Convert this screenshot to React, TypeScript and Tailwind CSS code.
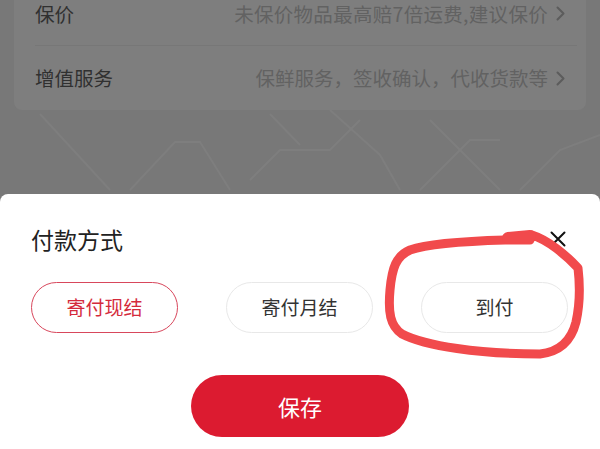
import React from "react";

function Chevron() {
  return (
    <svg width="9" height="15" viewBox="0 0 9 15" className="ml-[8px] shrink-0">
      <path d="M1.5 1.5 L7.5 7.5 L1.5 13.5" fill="none" stroke="#5c5c5c" strokeWidth="2" strokeLinecap="round" strokeLinejoin="round" />
    </svg>
  );
}

function Row({ label, value, divider, wide }: { label: string; value: string; divider?: boolean; wide?: boolean }) {
  return (
    <div className={`h-[64px] ml-[21px] mr-[9px] pr-[12px] flex items-center justify-between ${divider ? "border-b border-[#777777]" : ""}`}>
      <span className="text-[19.5px] text-[#303030]">{label}</span>
      <div className="flex items-center">
        <span className={`text-[19.5px] text-[#626262] ${wide ? "tracking-[0.3px]" : "tracking-[0px]"}`}>{value}</span>
        <Chevron />
      </div>
    </div>
  );
}

function Pill({ text, active }: { text: string; active?: boolean }) {
  return (
    <div
      className={`w-[147px] h-[51px] rounded-full flex items-center justify-center text-[19px] border ${
        active ? "border-[#d8475c] text-[#d42a3c]" : "border-[#e8e8e8] text-[#333333]"
      }`}
    >
      {text}
    </div>
  );
}

export default function App() {
  return (
    <div className="relative w-[600px] h-[449px] overflow-hidden bg-[#787878] flex flex-col font-['Noto_Sans_CJK_SC','Noto_Sans',sans-serif]">
      <div className="px-[14px]">
        <div className="-mt-[18px] bg-[#7e7e7e] rounded-b-[8px]">
          <Row label="保价" value="未保价物品最高赔7倍运费,建议保价" divider wide />
          <Row label="增值服务" value="保鲜服务，签收确认，代收货款等" />
        </div>
      </div>
      <div className="flex-1 relative">
        <svg className="absolute inset-0" width="600" height="83" viewBox="0 0 600 83">
          <g fill="none" stroke="#7e7e7e" strokeWidth="2">
            <path d="M40 4 L110 80" />
            <path d="M130 80 L175 32 L200 32 L230 80" />
            <path d="M250 70 L280 40 L330 40 L360 10" />
            <path d="M270 4 L300 35" />
            <path d="M330 0 L380 45 L400 80" />
            <path d="M420 80 L470 30 L500 30" />
            <path d="M430 10 L500 80" />
            <path d="M520 80 L560 40 L600 25" />
          </g>
        </svg>
      </div>
      <div className="h-[255px] bg-white rounded-t-[8px] flex flex-col pt-[30px]">
        <div className="h-[30px] flex items-center justify-between pl-[31px] pr-[34px]">
          <span className="text-[23px] leading-[30px] text-[#222222]">付款方式</span>
          <svg width="16" height="16" viewBox="0 0 16 16">
            <path d="M1.5 1.5 L14.5 14.5 M14.5 1.5 L1.5 14.5" stroke="#111111" strokeWidth="2" strokeLinecap="round" />
          </svg>
        </div>
        <div className="mt-[28px] flex gap-[48px] pl-[31px]">
          <Pill text="寄付现结" active />
          <Pill text="寄付月结" />
          <Pill text="到付" />
        </div>
        <div className="mt-[42px] mx-auto w-[218px] h-[62px] rounded-full bg-[#dc1b30] flex items-center justify-center text-white text-[22px]">
          保存
        </div>
      </div>
      <svg className="absolute inset-0 pointer-events-none" width="600" height="449" viewBox="0 0 600 449">
        <path
          d="M530 240 L505 240 C470 241 430 243 410 250 C396 256 392 268 390 290 C388 312 390 326 402 334 C425 346 480 354 540 354 C558 352 571 342 576 322 C580 304 580 285 578 268 C566 255 548 240 532 235"
          fill="none"
          stroke="#f14a4c"
          strokeWidth="9"
          strokeLinecap="round"
          strokeLinejoin="round"
        />
        <path d="M508 238 L530 236" stroke="#f14a4c" strokeWidth="12" strokeLinecap="round" />
      </svg>
    </div>
  );
}
